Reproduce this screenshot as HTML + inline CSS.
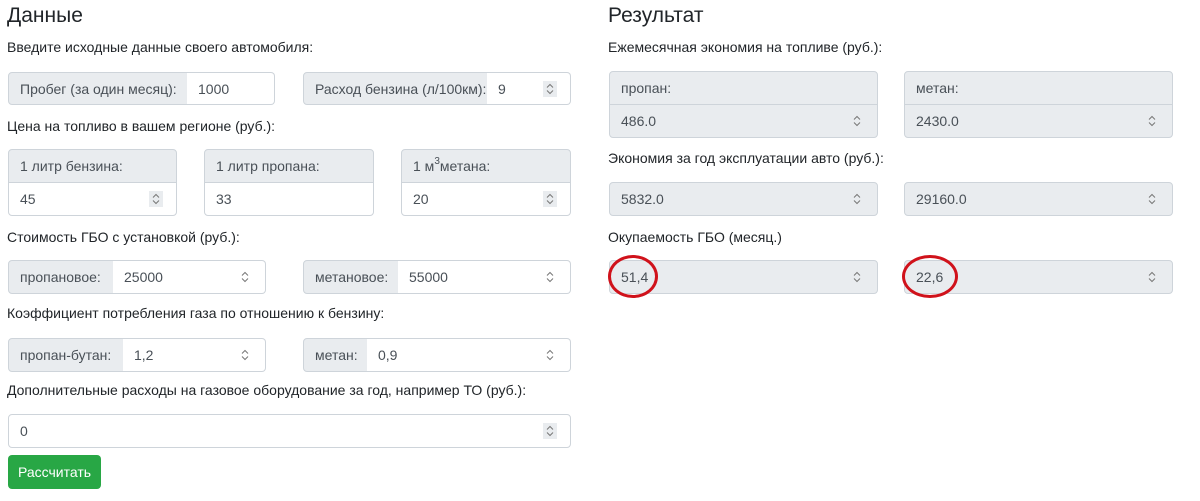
<!DOCTYPE html>
<html><head><meta charset="utf-8"><style>
*{box-sizing:border-box;margin:0;padding:0}
body{width:1200px;height:501px;background:#fff;font-family:"Liberation Sans","DejaVu Sans",sans-serif;color:#212529;position:relative;overflow:hidden;font-size:14px}
.a{position:absolute}
h2{position:absolute;font-weight:400;font-size:21px;color:#212529}
.t{position:absolute;font-size:14px;white-space:nowrap}
.lb{position:absolute;background:#e9ecef;border:1px solid #ced4da;border-radius:4px;color:#495057;font-size:14px;padding-left:11px;display:flex;align-items:center;white-space:nowrap}
.in{position:absolute;background:#fff;border:1px solid #ced4da;border-radius:4px;color:#495057;font-size:14px;padding-left:11px;display:flex;align-items:center}
.in.g{background:#e9ecef}
.sp{position:absolute;right:13px;top:50%;margin-top:-8px;width:14px;height:16px}
.sp.b{background:#e9ecef}
.sq{border-radius:4px 0 0 4px}.sq2{border-radius:0 4px 4px 0;border-left:none}
.top{border-radius:4px 4px 0 0}.bot{border-radius:0 0 4px 4px}
</style></head><body>
<svg width="0" height="0" style="position:absolute"><defs><symbol id="s" viewBox="0 0 14 16"><path d="M4 6.5 L7 3.5 L10 6.5 M4 9.5 L7 12.5 L10 9.5" fill="none" stroke="#777" stroke-width="1"/></symbol></defs></svg>

<h2 style="left:7px;top:4px">Данные</h2>
<div class="t" style="left:7px;top:39px">Введите исходные данные своего автомобиля:</div>
<div class="lb sq" style="left:8px;top:72px;width:180px;height:33px">Пробег (за один месяц):</div>
<div class="in sq2" style="left:187px;top:72px;width:88px;height:33px">1000</div>
<div class="lb sq" style="left:303px;top:72px;width:185px;height:33px">Расход бензина (л/100км):</div>
<div class="in sq2" style="left:487px;top:72px;width:84px;height:33px">9<svg class="sp b"><use href="#s"/></svg></div>

<div class="t" style="left:7px;top:118px">Цена на топливо в вашем регионе (руб.):</div>
<div class="lb top" style="left:8px;top:149px;width:169px;height:34px">1 литр бензина:</div>
<div class="in bot" style="left:8px;top:182px;width:169px;height:34px">45<svg class="sp b"><use href="#s"/></svg></div>
<div class="lb top" style="left:204px;top:149px;width:170px;height:34px">1 литр пропана:</div>
<div class="in bot" style="left:204px;top:182px;width:170px;height:34px">33</div>
<div class="lb top" style="left:401px;top:149px;width:170px;height:34px">1 м<sup style="font-size:10px;position:relative;top:-5px">3</sup>метана:</div>
<div class="in bot" style="left:401px;top:182px;width:170px;height:34px">20<svg class="sp b"><use href="#s"/></svg></div>

<div class="t" style="left:7px;top:229px">Стоимость ГБО с установкой (руб.):</div>
<div class="lb sq" style="left:8px;top:260px;width:106px;height:34px">пропановое:</div>
<div class="in sq2" style="left:113px;top:260px;width:153px;height:34px">25000<svg class="sp"><use href="#s"/></svg></div>
<div class="lb sq" style="left:303px;top:260px;width:96px;height:34px">метановое:</div>
<div class="in sq2" style="left:398px;top:260px;width:173px;height:34px">55000<svg class="sp"><use href="#s"/></svg></div>

<div class="t" style="left:7px;top:305px">Коэффициент потребления газа по отношению к бензину:</div>
<div class="lb sq" style="left:8px;top:338px;width:116px;height:34px">пропан-бутан:</div>
<div class="in sq2" style="left:123px;top:338px;width:143px;height:34px">1,2<svg class="sp"><use href="#s"/></svg></div>
<div class="lb sq" style="left:303px;top:338px;width:65px;height:34px">метан:</div>
<div class="in sq2" style="left:367px;top:338px;width:204px;height:34px">0,9<svg class="sp"><use href="#s"/></svg></div>

<div class="t" style="left:7px;top:382px">Дополнительные расходы на газовое оборудование за год, например ТО (руб.):</div>
<div class="in" style="left:8px;top:414px;width:563px;height:34px">0<svg class="sp b"><use href="#s"/></svg></div>
<div class="a" style="left:8px;top:455px;width:93px;height:34px;background:#28a745;border-radius:4px;color:#fff;font-size:14px;display:flex;align-items:center;justify-content:center">Рассчитать</div>

<h2 style="left:608px;top:4px">Результат</h2>
<div class="t" style="left:608px;top:39px">Ежемесячная экономия на топливе (руб.):</div>
<div class="lb top" style="left:609px;top:71px;width:269px;height:34px">пропан:</div>
<div class="in g bot" style="left:609px;top:104px;width:269px;height:34px">486.0<svg class="sp"><use href="#s"/></svg></div>
<div class="lb top" style="left:904px;top:71px;width:269px;height:34px">метан:</div>
<div class="in g bot" style="left:904px;top:104px;width:269px;height:34px">2430.0<svg class="sp"><use href="#s"/></svg></div>

<div class="t" style="left:608px;top:150px">Экономия за год эксплуатации авто (руб.):</div>
<div class="in g" style="left:609px;top:182px;width:269px;height:34px">5832.0<svg class="sp"><use href="#s"/></svg></div>
<div class="in g" style="left:904px;top:182px;width:269px;height:34px">29160.0<svg class="sp"><use href="#s"/></svg></div>

<div class="t" style="left:608px;top:229px">Окупаемость ГБО (месяц.)</div>
<div class="in g" style="left:609px;top:260px;width:269px;height:34px">51,4<svg class="sp"><use href="#s"/></svg></div>
<div class="in g" style="left:904px;top:260px;width:269px;height:34px">22,6<svg class="sp"><use href="#s"/></svg></div>
<div class="a" style="left:608px;top:255px;width:50px;height:43px;border:3px solid #d0121b;border-radius:50%"></div>
<div class="a" style="left:902px;top:255px;width:56px;height:43px;border:3px solid #d0121b;border-radius:50%"></div>
</body></html>
